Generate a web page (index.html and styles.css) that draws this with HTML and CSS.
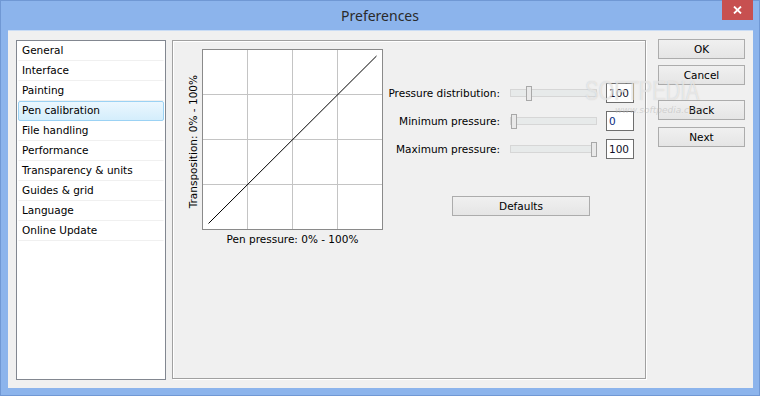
FILE: index.html
```html
<!DOCTYPE html>
<html>
<head>
    <title>Preferences</title>
    <link rel="stylesheet" href="styles.css">
</head>
<body>
    <div class="window">
        <div class="titlebar">
            <span></span>
            <span class="title">Preferences</span>
            <button class="close-btn">
                <svg width="9" height="8" viewBox="0 0 9 8">
                    <path d="M1 0.5 L8 7.5 M8 0.5 L1 7.5" stroke="#fff" stroke-width="1.8" fill="none"/>
                </svg>
            </button>
        </div>

        <div class="client">
            <!-- Category list -->
            <div class="category-list">
                <div class="item">General</div>
                <div class="item">Interface</div>
                <div class="item">Painting</div>
                <div class="item selected">Pen calibration</div>
                <div class="item">File handling</div>
                <div class="item">Performance</div>
                <div class="item">Transparency &amp; units</div>
                <div class="item">Guides &amp; grid</div>
                <div class="item">Language</div>
                <div class="item">Online Update</div>
            </div>

            <!-- Pen calibration page -->
            <div class="panel">
                <div class="chart-block">
                    <div class="vlabel"><span>Transposition: 0% - 100%</span></div>
                    <svg class="chart" width="181" height="181" viewBox="0 0 181 181">
                        <rect x="0" y="0" width="181" height="181" fill="#fff"/>
                        <path d="M45.5 1 V180 M90.5 1 V180 M135.5 1 V180 M1 45.5 H180 M1 90.5 H180 M1 135.5 H180" stroke="#c4c4c4" stroke-width="1"/>
                        <rect x="0.5" y="0.5" width="180" height="180" fill="none" stroke="#8a8a8a"/>
                        <path d="M6.5 174.5 L174.5 7" stroke="#000" stroke-width="1"/>
                    </svg>
                    <div class="hlabel">Pen pressure: 0% - 100%</div>
                </div>

                <div class="controls">
                    <div class="slider-grid">
                        <label class="slider-label">Pressure distribution:</label>
                        <div class="track"><div class="thumb" style="margin-left: 15px"></div></div>
                        <div class="value-box">100</div>

                        <label class="slider-label">Minimum pressure:</label>
                        <div class="track"><div class="thumb" style="margin-left: 0px"></div></div>
                        <div class="value-box zero">0</div>

                        <label class="slider-label">Maximum pressure:</label>
                        <div class="track"><div class="thumb" style="margin-left: 80px"></div></div>
                        <div class="value-box">100</div>
                    </div>
                    <button class="btn defaults-btn">Defaults</button>
                </div>
            </div>

            <!-- Dialog buttons -->
            <div class="button-column">
                <button class="btn">OK</button>
                <button class="btn cancel-btn">Cancel</button>
                <button class="btn back-btn">Back</button>
                <button class="btn next-btn">Next</button>
            </div>
        </div>

        <div class="watermark">
            <span class="wm-big">SOFTPEDIA</span>
            <span class="wm-small">www.softpedia.com</span>
        </div>
    </div>
</body>
</html>
```

FILE: styles.css
```css
body {
    margin: 0;
    font-family: "DejaVu Sans", "Liberation Sans", sans-serif;
    font-size: 10.5px;
    color: #000;
}
.window {
    position: relative;
    width: 760px;
    height: 396px;
    box-sizing: border-box;
    background-color: #8cb4ec;
    border: 1px solid #7098d4;
    display: flex;
    flex-direction: column;
}
.titlebar {
    height: 29px;
    display: grid;
    grid-template-columns: 1fr auto 1fr;
}
.title {
    font-family: "Noto Sans", "Open Sans", sans-serif;
    font-size: 14px;
    color: #2a2a2a;
    line-height: 29px;
}
.close-btn {
    justify-self: end;
    width: 31px;
    height: 20px;
    margin: -1px 6px 0 0;
    padding: 0;
    border: none;
    background-color: #c75050;
    display: flex;
    align-items: center;
    justify-content: center;
}
.client {
    flex: 1;
    margin: 0 6px 7px 7px;
    padding: 8px 8px 0 8px;
    background-color: #f0f0f0;
    border-top: 1px solid #c9dcf5;
    display: flex;
    align-items: flex-start;
}
.category-list {
    width: 150px;
    height: 340px;
    flex: none;
    box-sizing: border-box;
    margin-top: 1px;
    background-color: #fff;
    border: 1px solid #828790;
}
.item {
    height: 17px;
    line-height: 17px;
    margin: 0 1px;
    padding: 0 3px 1px 3px;
    border: 1px solid transparent;
    border-bottom-color: #f0f0f0;
    white-space: nowrap;
}
.item.selected {
    border: 1px solid #9bd2f4;
    border-radius: 2px;
    background: linear-gradient(#ebf7fe, #d4eefc);
}
.panel {
    width: 474px;
    height: 339px;
    flex: none;
    box-sizing: border-box;
    margin: 1px 12px 0 6px;
    padding: 8px 0 0 10px;
    border: 1px solid #a0a0a0;
    box-shadow: 1px 1px 0 #fff, inset 1px 1px 0 #fff;
    display: flex;
    align-items: flex-start;
}
.chart-block {
    display: grid;
    grid-template-columns: 19px 181px;
}
.vlabel {
    height: 181px;
    display: flex;
    align-items: center;
    justify-content: center;
    padding-top: 5px;
    box-sizing: border-box;
}
.vlabel span {
    writing-mode: vertical-rl;
    transform: rotate(180deg);
    white-space: nowrap;
}
.chart {
    display: block;
}
.hlabel {
    grid-column: 2;
    margin-top: 2px;
    text-align: center;
    line-height: 14px;
}
.controls {
    margin: 34px 0 0 5px;
    display: flex;
    flex-direction: column;
}
.slider-grid {
    display: grid;
    grid-template-columns: 112px 87px 27px;
    grid-auto-rows: 20px;
    column-gap: 10px;
    row-gap: 8px;
    align-items: center;
}
.slider-grid .value-box {
    margin-left: -1px;
}
.slider-label {
    justify-self: end;
    white-space: nowrap;
}
.track {
    height: 8px;
    box-sizing: border-box;
    background-color: #e7eaea;
    border: 1px solid #d6d6d6;
    display: flex;
    align-items: center;
}
.thumb {
    width: 6px;
    height: 15px;
    flex: none;
    box-sizing: border-box;
    background-color: #e9e9e9;
    border: 1px solid #a8a8a8;
}
.value-box {
    height: 20px;
    box-sizing: border-box;
    background-color: #fff;
    border: 1px solid #6e6e6e;
    padding-left: 2px;
    line-height: 18px;
    color: #101028;
}
.value-box.zero {
    color: #0a2a80;
}
.btn {
    width: 87px;
    height: 20px;
    padding: 0;
    font-family: "DejaVu Sans", "Liberation Sans", sans-serif;
    font-size: 10.5px;
    color: #000;
    border: 1px solid #acacac;
    background: linear-gradient(#f0f0f0, #e5e5e5);
}
.defaults-btn {
    width: 138px;
    margin: 37px 0 0 64px;
}
.button-column {
    display: flex;
    flex-direction: column;
}
.cancel-btn {
    margin-top: 6px;
}
.back-btn {
    margin-top: 15px;
}
.next-btn {
    margin-top: 7px;
}
.watermark {
    position: absolute;
    left: 584px;
    top: 76px;
    display: flex;
    flex-direction: column;
    pointer-events: none;
}
.wm-big {
    font-family: "Liberation Sans", sans-serif;
    font-size: 28px;
    line-height: 28px;
    color: rgba(255, 255, 255, 0.55);
    text-shadow: 0 0 1px rgba(160, 160, 160, 0.5);
    transform: scaleX(0.72);
    transform-origin: left;
}
.wm-small {
    margin-left: 30px;
    font-size: 9px;
    font-style: italic;
    color: rgba(180, 180, 180, 0.5);
}
```
